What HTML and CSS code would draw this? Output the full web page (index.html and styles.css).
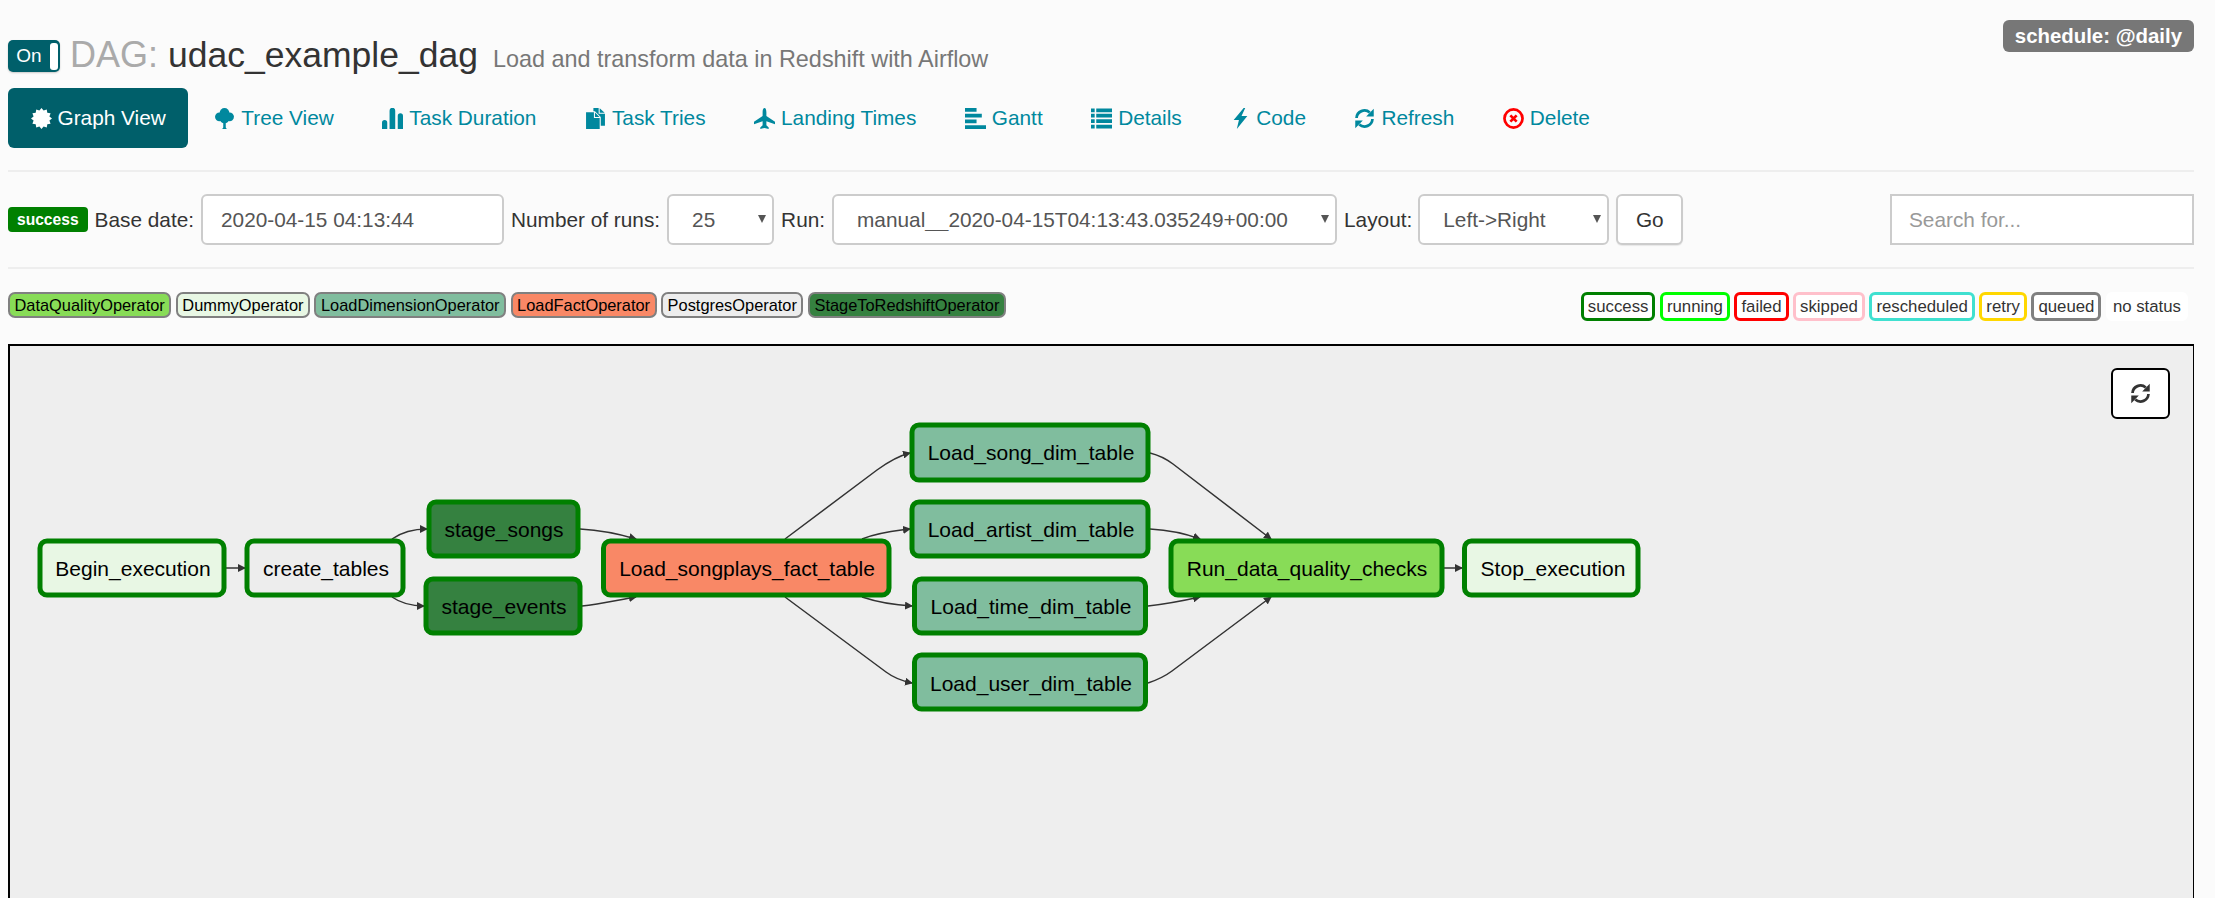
FILE: index.html
```html
<!DOCTYPE html>
<html>
<head>
    <title>Airflow - udac_example_dag</title>
    <link rel="stylesheet" href="styles.css">
</head>
<body>
<svg class="sprite" width="0" height="0">
    <symbol id="i-certificate" viewBox="0 0 20 20"><polygon points="20,10 17.53,12.02 18.66,15 15.52,15.52 15,18.66 12.02,17.53 10,20 7.98,17.53 5,18.66 4.48,15.52 1.34,15 2.47,12.02 0,10 2.47,7.98 1.34,5 4.48,4.48 5,1.34 7.98,2.47 10,0 12.02,2.47 15,1.34 15.52,4.48 18.66,5 17.53,7.98"/></symbol>
    <symbol id="i-tree" viewBox="0 0 20 20"><circle cx="10" cy="4.6" r="4.6"/><circle cx="5.2" cy="8.4" r="4.2"/><circle cx="14.8" cy="8.4" r="4.2"/><circle cx="10" cy="10" r="4.6"/><path d="M8.8 12h2.4v6.5l1 1.5h-4.4l1-1.5z"/></symbol>
    <symbol id="i-stats" viewBox="0 0 20 20"><path d="M0 14a2.5 2.5 0 0 1 5 0v6H0zM7.2 2.5a2.7 2.7 0 0 1 5.4 0V20H7.2zM15 7.5a2.5 2.5 0 0 1 5 0V20h-5z"/></symbol>
    <symbol id="i-duplicate" viewBox="0 0 20 20"><path d="M1 4H8.5V9.5H14V20H1zM9.5 4.2L13.8 8.5H9.5zM8 0H13V5.500H19V17H15V8.500L9.500 3H8zM14 .3L18.700 4.500H14z"/></symbol>
    <symbol id="i-plane" viewBox="0 0 20 20"><path d="M10 0C11.2 0 11.8 2 11.8 4V7.5L20 13V15.5L11.8 12.5V16.5L14 18.5V20L10 19L6 20V18.5L8.2 16.5V12.5L0 15.5V13L8.2 7.5V4C8.2 2 8.8 0 10 0Z"/></symbol>
    <symbol id="i-gantt" viewBox="0 0 20 20"><path d="M0 0H11V3.5H0zM0 5.5H16V9H0zM0 11H11V14.5H0zM0 16.5H20V20H0z"/></symbol>
    <symbol id="i-list" viewBox="0 0 20 20"><path d="M0 .5H3.5V4H0zM5 .5H20V4H5zM0 5.5H3.5V9H0zM5 5.5H20V9H5zM0 10.8H3.5V14.3H0zM5 10.8H20V14.3H5zM0 16H3.5V19.5H0zM5 16H20V19.5H5z"/></symbol>
    <symbol id="i-flash" viewBox="0 0 20 20"><polygon points="13,0 3.5,11.5 8.5,11.5 6.5,20 16.5,7.5 11,7.5 14.5,0"/></symbol>
    <symbol id="i-refresh" viewBox="0 0 20 20"><path class="arc" d="M2.4 9.5A7.6 7.6 0 0 1 15 4.3M17.6 10.5A7.6 7.6 0 0 1 5 15.7"/><path d="M18.8 .8V8H11.6zM1.2 19.2V12H8.4z"/></symbol>
    <symbol id="i-remove" viewBox="0 0 20 20"><circle class="arc" cx="10" cy="10" r="8.6"/><path class="arc" d="M7 7L13 13M13 7L7 13"/></symbol>
</svg>

<div class="page">
    <div class="dag-header">
        <h3 class="dag-title">
            <span class="toggle"><span class="toggle-on">On</span><span class="toggle-handle"></span></span>
            <span class="dag-label">DAG:</span>
            <span class="dag-name">udac_example_dag</span>
            <small class="dag-desc">Load and transform data in Redshift with Airflow</small>
        </h3>
        <span class="schedule">schedule: @daily</span>
    </div>

    <ul class="nav">
        <li class="active"><a><svg class="icon"><use href="#i-certificate"/></svg>Graph View</a></li>
        <li><a><svg class="icon"><use href="#i-tree"/></svg>Tree View</a></li>
        <li><a><svg class="icon"><use href="#i-stats"/></svg>Task Duration</a></li>
        <li><a><svg class="icon"><use href="#i-duplicate"/></svg>Task Tries</a></li>
        <li><a><svg class="icon"><use href="#i-plane"/></svg>Landing Times</a></li>
        <li><a><svg class="icon"><use href="#i-gantt"/></svg>Gantt</a></li>
        <li><a><svg class="icon"><use href="#i-list"/></svg>Details</a></li>
        <li><a><svg class="icon icon-flash"><use href="#i-flash"/></svg>Code</a></li>
        <li><a><svg class="icon"><use href="#i-refresh"/></svg>Refresh</a></li>
        <li><a><svg class="icon icon-delete"><use href="#i-remove"/></svg>Delete</a></li>
    </ul>

    <hr>

    <form class="filter-row">
        <span class="state-badge">success</span>
        <label for="baseDate">Base date:</label>
        <input class="field date-field" type="text" id="baseDate" value="2020-04-15 04:13:44">
        <label for="numRuns">Number of runs:</label>
        <span class="select-wrap runs-select">
            <select class="field" id="numRuns"><option>25</option></select>
        </span>
        <label for="run">Run:</label>
        <span class="select-wrap run-select">
            <select class="field" id="run"><option>manual__2020-04-15T04:13:43.035249+00:00</option></select>
        </span>
        <label for="layout">Layout:</label>
        <span class="select-wrap layout-select">
            <select class="field" id="layout"><option>Left-&gt;Right</option></select>
        </span>
        <button class="go-btn" type="button">Go</button>
        <input class="search-field" type="text" placeholder="Search for...">
    </form>

    <hr>

    <div class="legend-row">
        <div class="legend">
            <span class="op op-quality">DataQualityOperator</span>
            <span class="op op-dummy">DummyOperator</span>
            <span class="op op-dim">LoadDimensionOperator</span>
            <span class="op op-fact">LoadFactOperator</span>
            <span class="op op-postgres">PostgresOperator</span>
            <span class="op op-stage">StageToRedshiftOperator</span>
        </div>
        <div class="legend legend-states">
            <span class="st st-success">success</span>
            <span class="st st-running">running</span>
            <span class="st st-failed">failed</span>
            <span class="st st-skipped">skipped</span>
            <span class="st st-rescheduled">rescheduled</span>
            <span class="st st-retry">retry</span>
            <span class="st st-queued">queued</span>
            <span class="st st-none">no status</span>
        </div>
    </div>

    <div class="graph">
        <button class="graph-refresh" type="button"><svg class="icon"><use href="#i-refresh"/></svg></button>
        <svg class="graph-svg" width="2184" height="560" viewBox="10 346 2184 560">
            <defs>
                <marker id="arrow" markerWidth="8" markerHeight="8" refX="7" refY="4" orient="auto" markerUnits="userSpaceOnUse">
                    <path class="arrow-head" d="M0 0L8 4L0 8z"/>
                </marker>
            </defs>
            <g class="edges">
                <path d="M226 568L245 568"/>
                <path d="M392 539C402 532 412 529 427 529"/>
                <path d="M392 597C402 604 412 606 424 606"/>
                <path d="M580 529C598 530 616 533 636 539"/>
                <path d="M582 606C600 604 618 600 636 597"/>
                <path d="M785 539L877 470C888 462 898 456 910 453"/>
                <path d="M862 539C880 532 895 531 910 529"/>
                <path d="M862 597C880 603 895 605 912 606"/>
                <path d="M785 597L886 672C894 678 902 681 912 683"/>
                <path d="M1150 453C1158 455 1165 458 1173 464L1271 539"/>
                <path d="M1150 529C1168 530 1184 533 1200 539"/>
                <path d="M1148 606C1166 604 1182 601 1200 597"/>
                <path d="M1148 683C1157 680 1164 677 1172 671L1271 597"/>
                <path d="M1444 568L1462 568"/>
            </g>

            <g class="node n-dummy"><rect x="40" y="541" width="184" height="54" rx="7"/><text x="133" y="576">Begin_execution</text></g>
            <g class="node n-postgres"><rect x="247" y="541" width="156" height="54" rx="7"/><text x="326" y="576">create_tables</text></g>
            <g class="node n-stage"><rect x="429" y="502" width="149" height="54" rx="7"/><text x="504" y="537">stage_songs</text></g>
            <g class="node n-stage"><rect x="426" y="579" width="154" height="54" rx="7"/><text x="504" y="614">stage_events</text></g>
            <g class="node n-fact"><rect x="603.5" y="541" width="285.5" height="54" rx="7"/><text x="747" y="576">Load_songplays_fact_table</text></g>
            <g class="node n-dim"><rect x="912" y="425" width="236" height="55" rx="7"/><text x="1031" y="460">Load_song_dim_table</text></g>
            <g class="node n-dim"><rect x="912" y="502" width="236" height="54" rx="7"/><text x="1031" y="537">Load_artist_dim_table</text></g>
            <g class="node n-dim"><rect x="914.5" y="579" width="231" height="54" rx="7"/><text x="1031" y="614">Load_time_dim_table</text></g>
            <g class="node n-dim"><rect x="914.5" y="655" width="231" height="54" rx="7"/><text x="1031" y="691">Load_user_dim_table</text></g>
            <g class="node n-quality"><rect x="1171" y="541" width="271" height="54" rx="7"/><text x="1307" y="576">Run_data_quality_checks</text></g>
            <g class="node n-dummy"><rect x="1464.5" y="541" width="173.5" height="54" rx="7"/><text x="1553" y="576">Stop_execution</text></g>
        </svg>
    </div>
</div>
</body>
</html>
```

FILE: styles.css
```css
html, body {
    height: 898px;
    overflow: hidden;
}

body {
    font-family: "Liberation Sans", Arial, sans-serif;
    font-size: 20.8px;
    color: #333;
    background-color: #fbfbfb;
    margin: 0;
    padding: 0;
}

.sprite {
    position: absolute;
}

.page {
    padding: 0 21px 0 8px;
}

.icon {
    width: 21px;
    height: 21px;
    margin-right: 6px;
    fill: currentColor;
    flex: none;
}

.arc {
    fill: none;
    stroke: currentColor;
    stroke-width: 2.6;
}

/* header */
.dag-header {
    display: flex;
    justify-content: space-between;
    height: 88px;
}

.dag-title {
    display: flex;
    align-items: baseline;
    margin: 0;
    padding-top: 34px;
    font-size: 35.5px;
    line-height: 42px;
    font-weight: normal;
    height: 42px;
}

.toggle {
    display: flex;
    align-items: center;
    align-self: flex-start;
    width: 52px;
    height: 32px;
    margin: 6px 10px 0 0;
    box-sizing: border-box;
    padding: 0 2px 0 0;
    background-color: #005f6a;
    border-radius: 5px;
    box-shadow: 0 1px 2px rgba(0, 0, 0, 0.2);
}

.toggle-on {
    flex: 1;
    text-align: center;
    color: #fff;
    font-size: 19px;
    line-height: 32px;
}

.toggle-handle {
    width: 8px;
    height: 27px;
    background-color: #fff;
    border-radius: 3px;
}

.dag-label {
    color: #aaa;
    font-size: 36px;
    margin-right: 10px;
}

.dag-name {
    color: #333;
    margin-right: 15px;
}

.dag-desc {
    color: #777;
    font-size: 23.4px;
}

.schedule {
    align-self: flex-start;
    margin-top: 20px;
    height: 32px;
    line-height: 32px;
    padding: 0 12px;
    background-color: #777;
    color: #fff;
    font-weight: bold;
    font-size: 20.4px;
    border-radius: 6px;
}

/* nav pills */
.nav {
    display: flex;
    gap: 3.5px;
    list-style: none;
    margin: 0;
    padding: 0;
    height: 60px;
}

.nav a {
    display: flex;
    align-items: center;
    height: 60px;
    padding: 0 22.5px;
    color: #00889e;
    border-radius: 6px;
}

.nav .active a {
    background-color: #005f6a;
    color: #fff;
}

.icon-flash {
    margin-right: 5px;
}

.icon-delete {
    color: #f00;
}

hr {
    border: none;
    border-top: 2px solid #eee;
    margin: 22px 0;
}

/* filter form */
.filter-row {
    display: flex;
    align-items: center;
    gap: 7px;
    height: 51px;
}

.state-badge {
    background-color: #008000;
    color: #fff;
    font-weight: bold;
    font-size: 15.6px;
    line-height: 25px;
    padding: 0 9px;
    border-radius: 4px;
}

.field {
    box-sizing: border-box;
    height: 51px;
    width: 100%;
    font-family: inherit;
    font-size: 20.8px;
    color: #555;
    background-color: #fff;
    border: 2px solid #ccc;
    border-radius: 6px;
    padding: 0 18px;
    outline: none;
    appearance: none;
}

.date-field {
    width: 303px;
}

select.field {
    padding-left: 23px;
}

.select-wrap {
    position: relative;
    display: block;
}

.select-wrap::after {
    content: "";
    position: absolute;
    right: 8px;
    top: 21px;
    border-style: solid;
    border-width: 8px 4.5px 0;
    border-color: #555 transparent transparent;
}

.runs-select {
    width: 107px;
}

.run-select {
    width: 505px;
}

.layout-select {
    width: 191px;
    margin-left: -1px;
}

.go-btn {
    box-sizing: border-box;
    width: 67px;
    height: 51px;
    font-family: inherit;
    font-size: 20.8px;
    color: #333;
    background-color: #fff;
    border: 2px solid #ccc;
    border-radius: 6px;
    box-shadow: 0 1px 1px rgba(0, 0, 0, 0.08);
}

.search-field {
    box-sizing: border-box;
    width: 304px;
    height: 51px;
    margin-left: auto;
    padding: 0 17px;
    font-family: inherit;
    font-size: 20.8px;
    background-color: #fff;
    border: 2px solid #ccc;
    outline: none;
}

.search-field::placeholder {
    color: #999;
}

/* legend */
.legend-row {
    display: flex;
    justify-content: space-between;
    height: 52px;
    padding-top: 1px;
}

.legend {
    display: flex;
    align-items: flex-start;
    gap: 4.5px;
    font-size: 16.4px;
}

.op {
    box-sizing: border-box;
    height: 26px;
    line-height: 22px;
    padding: 0 4.5px;
    color: #000;
    border: 2px solid #808080;
    border-radius: 7px;
}

.op-quality { background-color: #88dc57; }
.op-dummy { background-color: #e8f7e4; }
.op-dim { background-color: #80bd9e; }
.op-fact { background-color: #f98866; }
.op-postgres { background-color: #ededed; }
.op-stage { background-color: #358140; }

.legend-states {
    padding-right: 6px;
    font-size: 16.8px;
}

.st {
    box-sizing: border-box;
    height: 29px;
    line-height: 23px;
    padding: 0 4px;
    background-color: #fff;
    border: 3px solid #fff;
    border-radius: 6px;
}

.st-success { border-color: #008000; }
.st-running { border-color: #00ff00; }
.st-failed { border-color: #ff0000; }
.st-skipped { border-color: #ffc0cb; }
.st-rescheduled { border-color: #40e0d0; }
.st-retry { border-color: #ffd700; }
.st-queued { border-color: #808080; }

/* graph */
.graph {
    position: relative;
    height: 600px;
    background-color: #eee;
    border: 2px solid #000;
    border-right-width: 1px;
}

.graph-svg {
    display: block;
}

.graph-refresh {
    position: absolute;
    top: 22px;
    right: 23px;
    box-sizing: border-box;
    width: 59px;
    height: 51px;
    display: flex;
    align-items: center;
    justify-content: center;
    background-color: #fff;
    color: #333;
    border: 2px solid #000;
    border-radius: 6px;
    padding: 0;
}

.graph-refresh .icon {
    margin: 0;
}

.edges path {
    fill: none;
    stroke: #333;
    stroke-width: 1.5;
    marker-end: url(#arrow);
}

.arrow-head {
    fill: #333;
}

.node rect {
    stroke: #008000;
    stroke-width: 5px;
}

.node text {
    font-family: "Liberation Sans", Arial, sans-serif;
    font-size: 21px;
    fill: #000;
    text-anchor: middle;
}

.n-dummy rect { fill: #e8f7e4; }
.n-postgres rect { fill: #ededed; }
.n-stage rect { fill: #358140; }
.n-fact rect { fill: #f98866; }
.n-dim rect { fill: #80bd9e; }
.n-quality rect { fill: #88dc57; }
```
